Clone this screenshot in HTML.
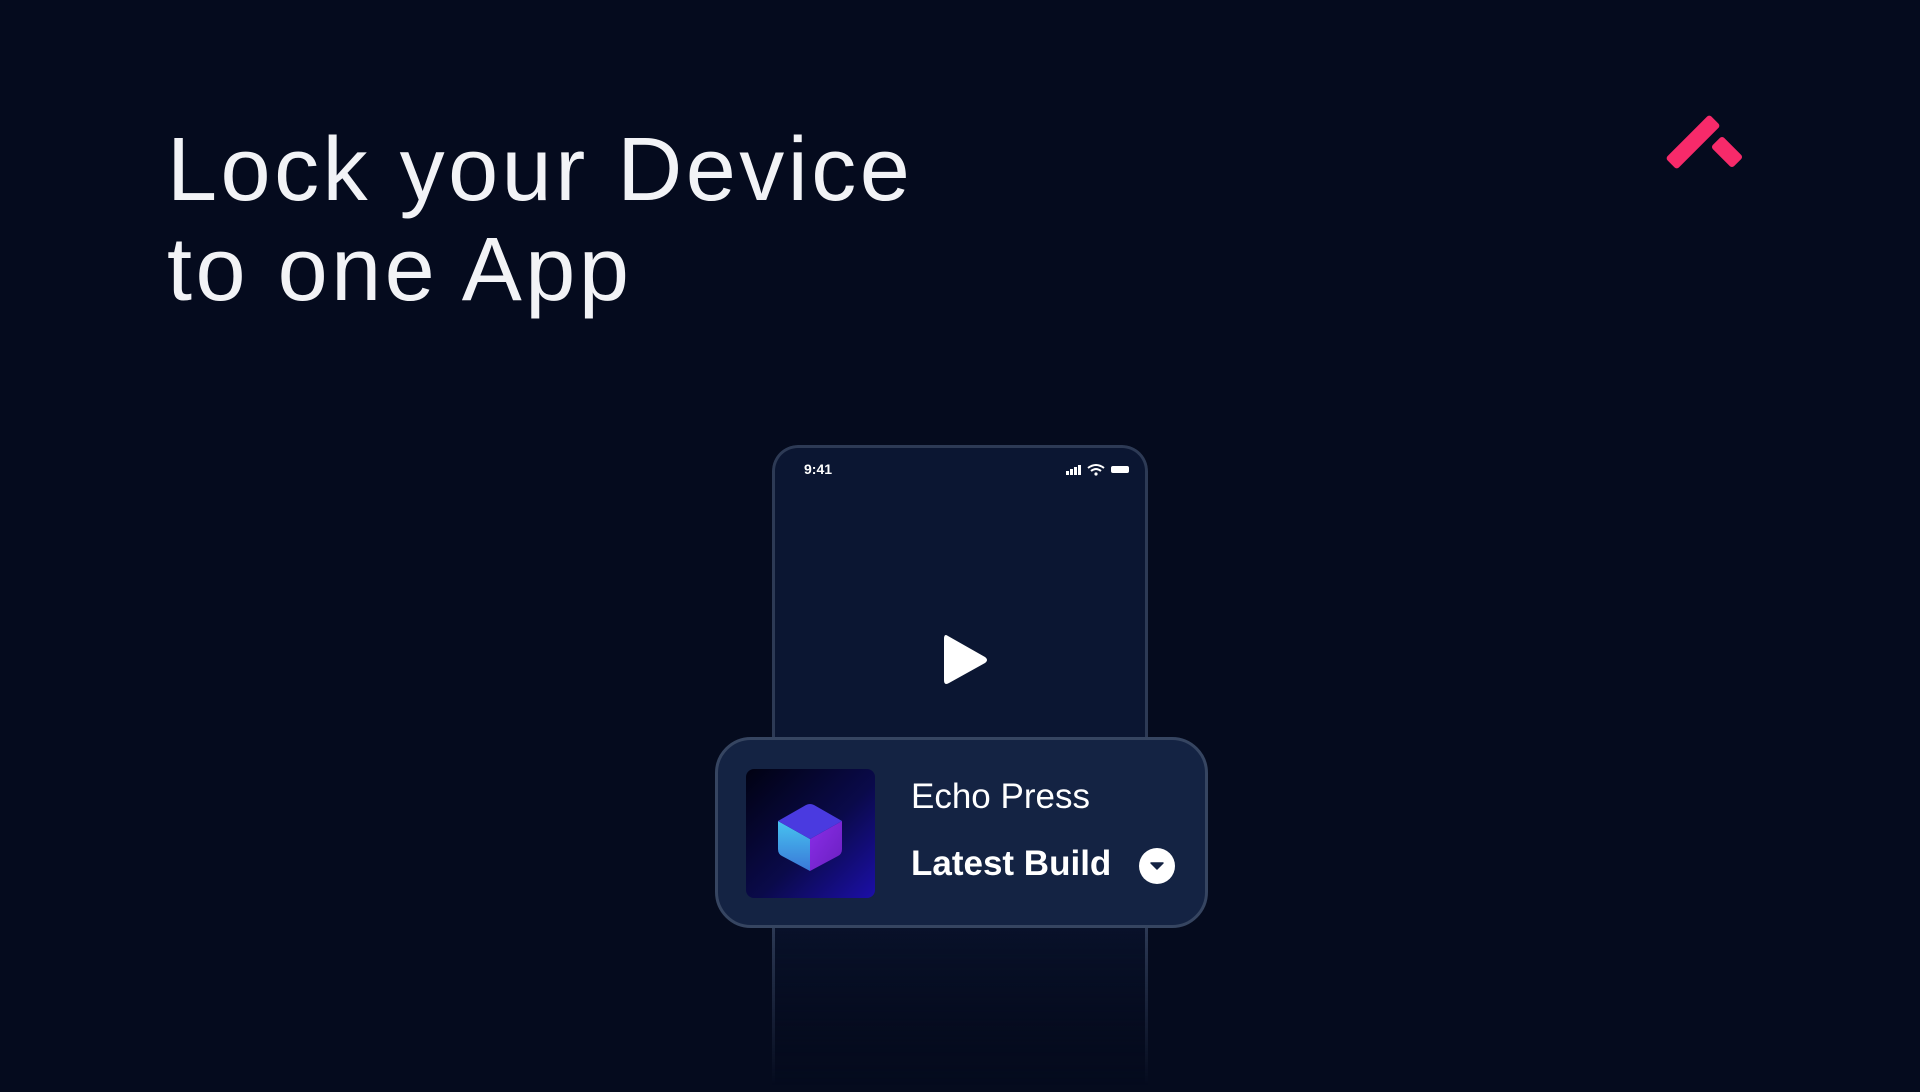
<!DOCTYPE html>
<html><head><style>
body{margin:0;width:1920px;height:1092px;background:#050b1e;overflow:hidden;position:relative;font-family:"Liberation Sans",sans-serif}
h1{position:absolute;left:167px;top:120px;margin:0;font-weight:300;font-size:90px;line-height:100px;color:#f2f3f6;letter-spacing:3.5px}
.phone{position:absolute;left:772px;top:445px;width:376px;height:640px;border:3px solid #2d3a55;border-bottom:none;border-radius:26px 26px 0 0;box-sizing:border-box;background:linear-gradient(#0b1632 0%,#0b1632 60%,#050b1e 100%);-webkit-mask:linear-gradient(#000 75%,transparent 100%);mask:linear-gradient(#000 75%,transparent 100%)}
.card{position:absolute;left:715px;top:737px;width:493px;height:191px;box-sizing:border-box;border:3px solid #364561;border-radius:36px;background:#142343}
.thumb{position:absolute;left:28px;top:29px;width:129px;height:129px;border-radius:8px;background:linear-gradient(135deg,#010212 0%,#0a0a4a 55%,#1c0fa8 100%)}
.t1{position:absolute;left:193px;top:37px;color:#fff;font-size:35px}
.t2{position:absolute;left:193px;top:104px;color:#fff;font-size:35px;font-weight:bold}
.dd{position:absolute;left:421px;top:108px;width:36px;height:36px;border-radius:50%;background:#fff}
</style></head><body>
<h1>Lock your Device<br>to one App</h1>
<svg style="position:absolute;left:1660px;top:110px" width="90" height="70" viewBox="1660 110 90 70">
<rect x="-31" y="-8" width="62" height="16" rx="3" fill="#f72a6a" transform="translate(1693,142) rotate(-45)"/>
<rect x="-15" y="-8" width="30" height="16" rx="3" fill="#f72a6a" transform="translate(1727,152) rotate(45)"/>
</svg>
<div class="phone"></div>
<div style="position:absolute;left:804px;top:461px;color:#fff;font-size:14px;font-weight:bold">9:41</div>
<svg style="position:absolute;left:1066px;top:463px" width="66" height="14">
<rect x="0" y="8" width="3" height="4" fill="#fff"/><rect x="4" y="6" width="3" height="6" fill="#fff"/><rect x="8" y="4" width="3" height="8" fill="#fff"/><rect x="12" y="2" width="3" height="10" fill="#fff"/>
<path d="M22 5 Q30 -1 38 5" stroke="#fff" stroke-width="2" fill="none"/><path d="M25 8 Q30 4 35 8" stroke="#fff" stroke-width="2" fill="none"/><circle cx="30" cy="11" r="1.6" fill="#fff"/>
<rect x="45" y="3" width="18" height="7" rx="2" fill="#fff"/>
</svg>
<svg style="position:absolute;left:940px;top:630px" width="52" height="60"><path d="M8 6 Q4 3 4 9 V50 Q4 56 9 53 L45 33 Q49 30 45 27 Z" fill="#fff"/></svg>
<div class="card">
<div class="thumb"><svg width="129" height="129" viewBox="0 0 129 129">
<defs><linearGradient id="l" x1="0" y1="0" x2="0" y2="1"><stop offset="0" stop-color="#47c3f0"/><stop offset="1" stop-color="#3a78d8"/></linearGradient><linearGradient id="r" x1="0" y1="0" x2="1" y2="1"><stop offset="0" stop-color="#8a2ee8"/><stop offset="1" stop-color="#6a1fc0"/></linearGradient></defs>
<path d="M32 52 L64 70 L64 102 L36 87 Q32 85 32 80 Z" fill="url(#l)"/>
<path d="M96 52 L64 70 L64 102 L92 87 Q96 85 96 80 Z" fill="url(#r)"/>
<path d="M32 52 L60 36 Q64 34 68 36 L96 52 L64 70 Z" fill="#4a3ae0"/>
</svg></div>
<div class="t1">Echo Press</div>
<div class="t2">Latest Build</div>
<div class="dd"><svg width="36" height="36"><path d="M12 15 L24 15 L18 21 Z" fill="#142343" stroke="#142343" stroke-width="1.5" stroke-linejoin="round"/></svg></div>
</div>
</body></html>
